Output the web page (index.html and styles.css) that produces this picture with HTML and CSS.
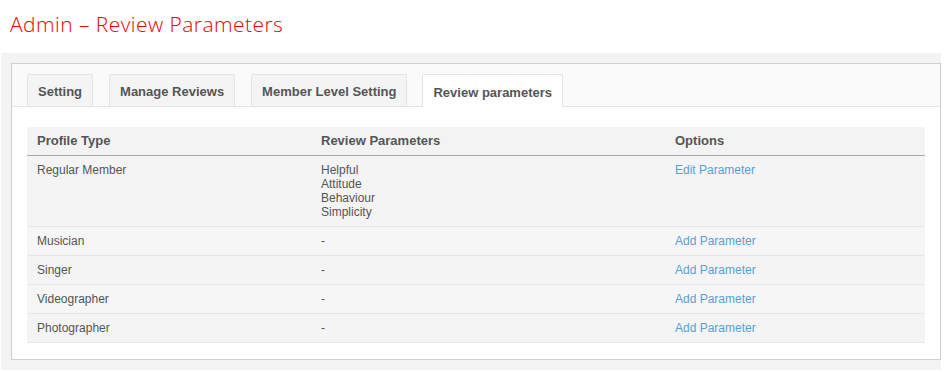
FILE: index.html
```html
<!DOCTYPE html>
<html>
<head>
<meta charset="utf-8">
<link rel="stylesheet" href="styles.css">
</head>
<body>
<h2 class="page-title">Admin – Review Parameters</h2>
<div class="panel">
  <div class="box">
    <div class="tabs">
      <div class="tab">Setting</div>
      <div class="tab">Manage Reviews</div>
      <div class="tab">Member Level Setting</div>
      <div class="tab active">Review parameters</div>
    </div>
    <table class="grid">
      <thead>
        <tr><th class="c1">Profile Type</th><th class="c2">Review Parameters</th><th class="c3">Options</th></tr>
      </thead>
      <tbody>
        <tr><td>Regular Member</td><td>Helpful<br>Attitude<br>Behaviour<br>Simplicity</td><td><a href="#">Edit Parameter</a></td></tr>
        <tr><td>Musician</td><td>-</td><td><a href="#">Add Parameter</a></td></tr>
        <tr><td>Singer</td><td>-</td><td><a href="#">Add Parameter</a></td></tr>
        <tr><td>Videographer</td><td>-</td><td><a href="#">Add Parameter</a></td></tr>
        <tr><td>Photographer</td><td>-</td><td><a href="#">Add Parameter</a></td></tr>
      </tbody>
    </table>
  </div>
</div>
</body>
</html>
```
FILE: styles.css
```css
html, body {
  margin: 0;
  padding: 0;
  background: #fff;
}
body {
  font-family: "Liberation Sans", Arial, sans-serif;
  color: #555;
}
.page-title {
  margin: 0;
  padding: 10px 0 0 10px;
  height: 53px;
  box-sizing: border-box;
  font-family: "Open Sans", sans-serif;
  font-weight: 300;
  font-size: 21px;
  line-height: 28px;
  letter-spacing: 0.45px;
  color: #f20000;
}
.panel {
  margin-left: 1px;
  width: 940px;
  background: #f3f3f3;
  padding: 10px 0 10px 10px;
  box-sizing: border-box;
  height: 317px;
}
.box {
  background: #fff;
  border: 1px solid #cfcfcf;
  height: 297px;
  box-sizing: border-box;
}
.tabs {
  display: flex;
  gap: 16px;
  background: #fafafa;
  border-bottom: 1px solid #e3e3e3;
  padding: 10px 15px 0 15px;
  height: 43px;
  box-sizing: border-box;
}
.tab {
  border: 1px solid #e3e3e3;
  border-bottom: none;
  background: #f4f4f4;
  font-weight: bold;
  font-size: 13px;
  color: #555;
  padding: 9px 10px 0 10px;
  height: 32px;
  box-sizing: border-box;
  border-radius: 2px 2px 0 0;
}
.tab.active {
  background: #fff;
  height: 33px;
  padding-top: 10px;
  margin-left: -1px;
}
.grid {
  margin: 20px 0 0 15px;
  width: 898px;
  border-collapse: collapse;
  font-size: 12px;
}
.grid th {
  background: #f3f3f3;
  text-align: left;
  font-size: 13px;
  font-weight: bold;
  color: #555;
  height: 28px;
  padding: 0 10px;
  border-bottom: 1px solid #a8a8a8;
  box-sizing: border-box;
}
.grid th.c1 { width: 284px; }
.grid th.c2 { width: 354px; }
.grid td {
  background: #f4f4f4;
  vertical-align: top;
  padding: 7px 10px;
  line-height: 14px;
  border-bottom: 1px solid #e6e6e6;
  color: #555;
}
.grid tbody tr:nth-child(even) td {
  background: #f6f6f6;
}
.grid a {
  color: #5a9fd4;
  text-decoration: none;
}
```
